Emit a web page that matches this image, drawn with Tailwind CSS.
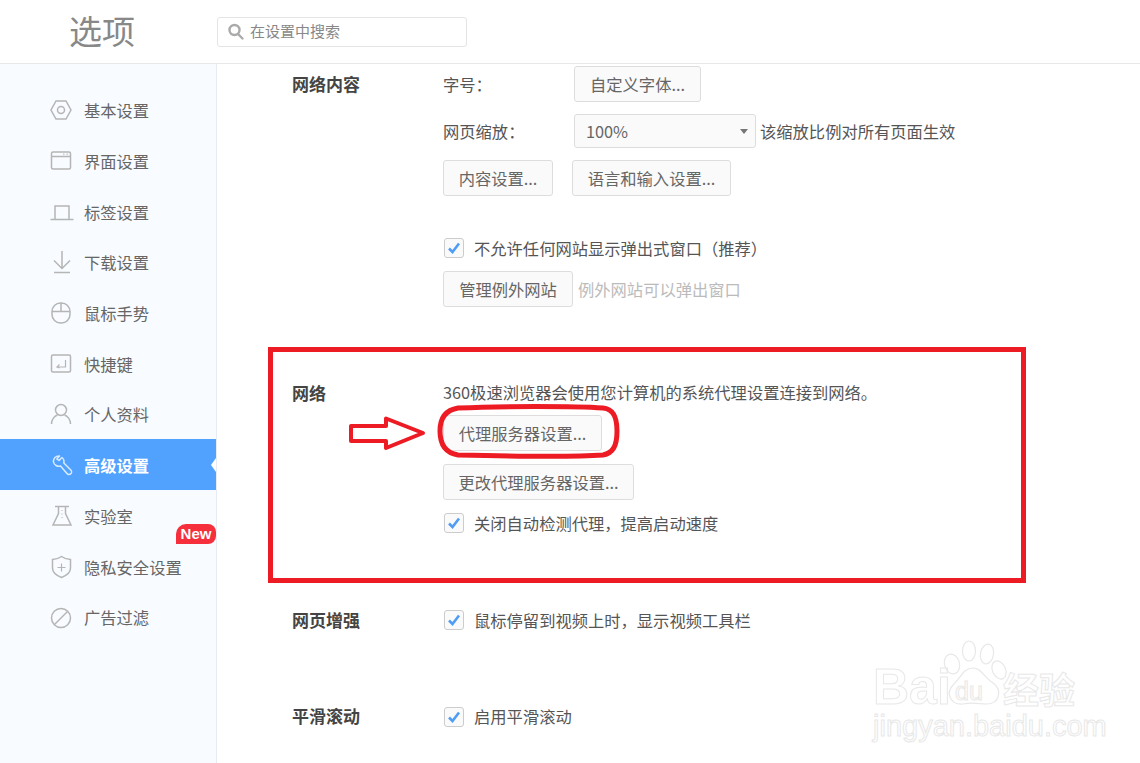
<!DOCTYPE html>
<html lang="zh-CN">
<head>
    <meta charset="UTF-8">
    <title>选项</title>
    <script src="https://cdn.jsdelivr.net/npm/@tailwindcss/browser@4"></script>
</head>
<body class="bg-white font-['Noto_Sans_CJK_SC','Liberation_Sans',sans-serif] text-[16.3px] text-[#555]">
<div class="relative w-[1140px] h-[763px] overflow-hidden flex flex-col">

    <!-- header -->
    <header class="h-[64px] shrink-0 flex items-center border-b border-[#e8e8e8]">
        <div class="w-[217px] pl-[69px] text-[33px] leading-none text-[#888] pb-[2px]">选项</div>
        <div class="w-[250px] h-[30px] border border-[#e4e4e4] rounded-[3px] flex items-center pl-[9px] gap-[6px] text-[15px] text-[#888]">
            <svg class="w-[17px] h-[17px]" viewBox="0 0 17 17" fill="none" stroke="#aaa" stroke-width="2.4">
                <circle cx="7.5" cy="7" r="5"/><path d="M11 11l4.5 4.500" stroke-linecap="round"/>
            </svg>
            <span>在设置中搜索</span>
        </div>
    </header>

    <div class="flex flex-1 min-h-0">
        <!-- sidebar -->
        <nav class="relative w-[217px] shrink-0 bg-[#f8fbff] border-r border-[#e6ecf5] pt-[20px] text-[#666]">
            <a class="h-[50.7px] flex items-center pl-[84px] pt-[2px] relative">
                <svg class="absolute left-[50px] w-[22px] h-[22px]" viewBox="0 0 22 22" fill="none" stroke="#b5b5b5" stroke-width="1.5"><path d="M6 2h10l5 9-5 9H6l-5-9z"/><circle cx="11" cy="11" r="3.5"/></svg>
                基本设置
            </a>
            <a class="h-[50.7px] flex items-center pl-[84px] pt-[2px] relative">
                <svg class="absolute left-[50px] w-[22px] h-[22px]" viewBox="0 0 22 22" fill="none" stroke="#b5b5b5" stroke-width="1.5"><rect x="1.5" y="2" width="19" height="17" rx="1.5"/><path d="M1.5 6.5h19"/><path d="M13 4.200h1.500M16.500 4.200H18" stroke-width="1"/></svg>
                界面设置
            </a>
            <a class="h-[50.7px] flex items-center pl-[84px] pt-[2px] relative">
                <svg class="absolute left-[50px] w-[24px] h-[22px]" viewBox="0 0 24 22" fill="none" stroke="#b5b5b5" stroke-width="1.5"><path d="M5 18V5h14v13"/><path d="M0.5 18.500h23"/></svg>
                标签设置
            </a>
            <a class="h-[50.7px] flex items-center pl-[84px] pt-[2px] relative">
                <svg class="absolute left-[50px] w-[22px] h-[24px]" viewBox="0 0 22 24" fill="none" stroke="#b5b5b5" stroke-width="1.5"><path d="M12 1v17M4 10.500l8 8 8-8"/><path d="M4 22.500h16"/></svg>
                下载设置
            </a>
            <a class="h-[50.7px] flex items-center pl-[84px] pt-[2px] relative">
                <svg class="absolute left-[50px] w-[22px] h-[24px]" viewBox="0 0 22 24" fill="none" stroke="#b5b5b5" stroke-width="1.5"><rect x="2" y="2" width="18" height="20" rx="8.5"/><path d="M2 10.500h18M11 2v8.500"/></svg>
                鼠标手势
            </a>
            <a class="h-[50.7px] flex items-center pl-[84px] pt-[2px] relative">
                <svg class="absolute left-[50px] w-[22px] h-[22px]" viewBox="0 0 22 22" fill="none" stroke="#b5b5b5" stroke-width="1.5"><rect x="1.5" y="2" width="19" height="17" rx="1.5"/><path d="M15.500 7v7H7M9.500 11.500L7 14l2.500 1" stroke-width="1.200"/></svg>
                快捷键
            </a>
            <a class="h-[50.7px] flex items-center pl-[84px] pt-[2px] relative">
                <svg class="absolute left-[50px] w-[22px] h-[22px]" viewBox="0 0 22 22" fill="none" stroke="#b5b5b5" stroke-width="1.5"><circle cx="11" cy="7" r="5.500"/><path d="M1.500 21c0-5 3.500-8.500 6-8.700M20.500 21c0-5-3.500-8.500-6-8.700"/></svg>
                个人资料
            </a>
            <a class="h-[51px] flex items-center pl-[84px] pt-[2px] relative bg-[#51a2ff] text-white font-bold">
                <svg class="absolute left-[52px] w-[21px] h-[21px]" viewBox="0 0 21 21" fill="none" stroke="#d9ebff" stroke-width="1.500" stroke-linejoin="round"><path d="M7.500 1C4 0.500 1 3.500 1.500 7 2 10 5.500 12 8.500 11L15 18.500C16 19.800 17.800 19.800 18.800 18.800 19.800 17.800 19.800 16 18.800 15L11.800 8C12.500 5 11.500 3.500 10 2.500L7 5.500 4.800 4z"/></svg>
                高级设置
                <span class="absolute right-0 top-[19px] w-0 h-0 border-y-[7px] border-y-transparent border-r-[5px] border-r-white"></span>
            </a>
            <a class="h-[50.7px] flex items-center pl-[84px] pt-[2px] relative">
                <svg class="absolute left-[51px] w-[22px] h-[22px]" viewBox="0 0 22 22" fill="none" stroke="#b5b5b5" stroke-width="1.5"><path d="M4 1.500h14M7.500 1.500v7L2 20h18L14.500 8.500v-7"/><path d="M11 5v1M11 8.500v1M11 12v1" stroke-width="1"/></svg>
                实验室
            </a>
            <a class="h-[50.7px] flex items-center pl-[84px] pt-[2px] relative">
                <svg class="absolute left-[51px] w-[21px] h-[24px]" viewBox="0 0 21 24" fill="none" stroke="#b5b5b5" stroke-width="1.5"><path d="M10.500 1.500C14 4 17 4.500 19.500 4.500V13c0 4.500-4 7.500-9 9.500-5-2-9-5-9-9.500V4.500C4 4.500 7 4 10.500 1.500z"/><path d="M10.500 8.500v8M6.500 12.500h8" stroke-width="1.200"/></svg>
                隐私安全设置
            </a>
            <a class="h-[50.7px] flex items-center pl-[84px] pt-[2px] relative">
                <svg class="absolute left-[50px] w-[22px] h-[22px]" viewBox="0 0 22 22" fill="none" stroke="#b5b5b5" stroke-width="1.5"><circle cx="11" cy="11" r="9.500"/><path d="M4.500 17.500L17.500 4.500"/></svg>
                广告过滤
            </a>
            <span class="absolute right-0 top-[460px] w-[40px] h-[20px] bg-[#f5303c] rounded-tl-[10px] rounded-r-[8px] text-white text-[15px] font-bold leading-[20px] text-center font-['Liberation_Sans',sans-serif]">New</span>
        </nav>

        <!-- settings content -->
        <main class="flex-1 pl-[75px] pt-[2px] min-w-0">
            <section class="flex">
                <h2 class="w-[151px] shrink-0 text-[17px] font-bold text-[#444] pt-[5px]">网络内容</h2>
                <div class="flex flex-col">
                    <div class="flex items-center h-[36px]">
                        <span class="w-[131px] text-[#555]">字号：</span>
                        <button class="h-[36px] w-[127px] bg-[#fafafa] border border-[#ddd] rounded-[3px] text-[#666]">自定义字体...</button>
                    </div>
                    <div class="flex items-center h-[34px] mt-[12px]">
                        <span class="w-[131px] text-[#555]">网页缩放：</span>
                        <div class="h-[34px] w-[182px] bg-[#fafafa] border border-[#ddd] rounded-[3px] flex items-center justify-between pl-[11px] pr-[7px] text-[#666]">
                            100%
                            <span class="w-0 h-0 border-x-[4.500px] border-x-transparent border-t-[5px] border-t-[#777]"></span>
                        </div>
                        <span class="ml-[4px]">该缩放比例对所有页面生效</span>
                    </div>
                    <div class="flex gap-[19px] mt-[12px]">
                        <button class="h-[36px] w-[110px] bg-[#fafafa] border border-[#ddd] rounded-[3px] text-[#666]">内容设置...</button>
                        <button class="h-[36px] w-[159px] bg-[#fafafa] border border-[#ddd] rounded-[3px] text-[#666]">语言和输入设置...</button>
                    </div>
                    <label class="flex items-center h-[24px] mt-[40px] gap-[10px]">
                        <span class="w-[20px] h-[20px] ml-[1px] border border-[#ccc] rounded-[3px] bg-[#fafafa] flex items-center justify-center">
                            <svg class="w-[14px] h-[14px]" viewBox="0 0 14 14" fill="none" stroke="#4f9df5" stroke-width="2.600"><path d="M2 7.500l3.500 3.500L12 2.500"/></svg>
                        </span>
                        不允许任何网站显示弹出式窗口（推荐）
                    </label>
                    <div class="flex items-center mt-[11px]">
                        <button class="h-[36px] w-[130px] bg-[#fafafa] border border-[#ddd] rounded-[3px] text-[#666]">管理例外网站</button>
                        <span class="ml-[5px] text-[#bbb]">例外网站可以弹出窗口</span>
                    </div>
                </div>
            </section>

            <section class="flex mt-[73px]">
                <h2 class="w-[151px] shrink-0 text-[17px] font-bold text-[#444]">网络</h2>
                <div class="flex flex-col items-start">
                    <p class="h-[24px] leading-[24px] text-[#555]">360极速浏览器会使用您计算机的系统代理设置连接到网络。</p>
                    <button class="h-[36px] w-[159px] mt-[11px] bg-[#fafafa] border border-[#ddd] rounded-[3px] text-[#666]">代理服务器设置...</button>
                    <button class="h-[36px] w-[191px] mt-[13px] bg-[#fafafa] border border-[#ddd] rounded-[3px] text-[#666]">更改代理服务器设置...</button>
                    <label class="flex items-center h-[24px] mt-[11px] gap-[10px]">
                        <span class="w-[20px] h-[20px] ml-[1px] border border-[#ccc] rounded-[3px] bg-[#fafafa] flex items-center justify-center">
                            <svg class="w-[14px] h-[14px]" viewBox="0 0 14 14" fill="none" stroke="#4f9df5" stroke-width="2.600"><path d="M2 7.500l3.500 3.500L12 2.500"/></svg>
                        </span>
                        关闭自动检测代理，提高启动速度
                    </label>
                </div>
            </section>

            <section class="flex mt-[73px]">
                <h2 class="w-[151px] shrink-0 text-[17px] font-bold text-[#444] -mt-[1px]">网页增强</h2>
                <label class="flex items-center h-[24px] gap-[10px]">
                    <span class="w-[20px] h-[20px] ml-[1px] border border-[#ccc] rounded-[3px] bg-[#fafafa] flex items-center justify-center">
                        <svg class="w-[14px] h-[14px]" viewBox="0 0 14 14" fill="none" stroke="#4f9df5" stroke-width="2.600"><path d="M2 7.500l3.500 3.500L12 2.500"/></svg>
                    </span>
                    鼠标停留到视频上时，显示视频工具栏
                </label>
            </section>

            <section class="flex mt-[72px]">
                <h2 class="w-[151px] shrink-0 text-[17px] font-bold text-[#444] -mt-[2px]">平滑滚动</h2>
                <label class="flex items-center h-[24px] gap-[10px]">
                    <span class="w-[20px] h-[20px] ml-[1px] border border-[#ccc] rounded-[3px] bg-[#fafafa] flex items-center justify-center">
                        <svg class="w-[14px] h-[14px]" viewBox="0 0 14 14" fill="none" stroke="#4f9df5" stroke-width="2.600"><path d="M2 7.500l3.500 3.500L12 2.500"/></svg>
                    </span>
                    启用平滑滚动
                </label>
            </section>
        </main>
    </div>

    <!-- red annotations drawn over the screenshot -->
    <div class="absolute left-[268px] top-[347px] w-[758px] h-[236px] border-[5px] border-[#ed1c24]"></div>
    <svg class="absolute left-0 top-0 w-[1140px] h-[763px] pointer-events-none" viewBox="0 0 1140 763" fill="none" stroke="#ed1c24">
        <path stroke-width="5" d="M458 408C500 406 575 406 603 408C614 409 617 418 617 431C617 446 613 453 603 455C575 457 500 456 458 455C446 453 440 445 440 431C440 418 446 410 458 408Z"/>
        <path stroke-width="4" stroke-linejoin="round" d="M351 426H386V418.500L423 433 386 448V441H351Z"/>
    </svg>

    <!-- watermark -->
    <div class="absolute left-[873px] top-[640px] w-[205px] h-[100px] pointer-events-none font-['Liberation_Sans',sans-serif] text-transparent [-webkit-text-stroke:1px_#e8e8e8]">
        <span class="absolute left-0 top-[22px] text-[50px] leading-[50px] font-bold">Bai</span>
        <svg class="absolute left-[70px] top-0 w-[66px] h-[68px]" viewBox="0 0 66 68" fill="none" stroke="#e8e8e8" stroke-width="1.200">
            <ellipse cx="9" cy="24" rx="7.500" ry="10" transform="rotate(-15 9 24)"/>
            <ellipse cx="26" cy="11" rx="6.500" ry="10"/>
            <ellipse cx="44" cy="14" rx="6.500" ry="10" transform="rotate(10 44 14)"/>
            <ellipse cx="56" cy="30" rx="6.500" ry="9.500" transform="rotate(-25 56 30)"/>
            <path d="M30 28C38 28 42 38 50 43C60 50 56 64 44 64C36 64 30 62 20 64C8 65 2 54 10 45C18 38 20 28 30 28Z"/>
        </svg>
        <span class="absolute left-[82px] top-[36px] text-[25px] leading-[30px]">du</span>
        <span class="absolute left-[130px] top-[28px] text-[36px] leading-[40px] font-bold font-['Noto_Sans_CJK_SC',sans-serif]">经验</span>
        <span class="absolute left-0 top-[70px] text-[29px] leading-[32px]">jingyan.baidu.com</span>
    </div>
</div>
</body>
</html>
